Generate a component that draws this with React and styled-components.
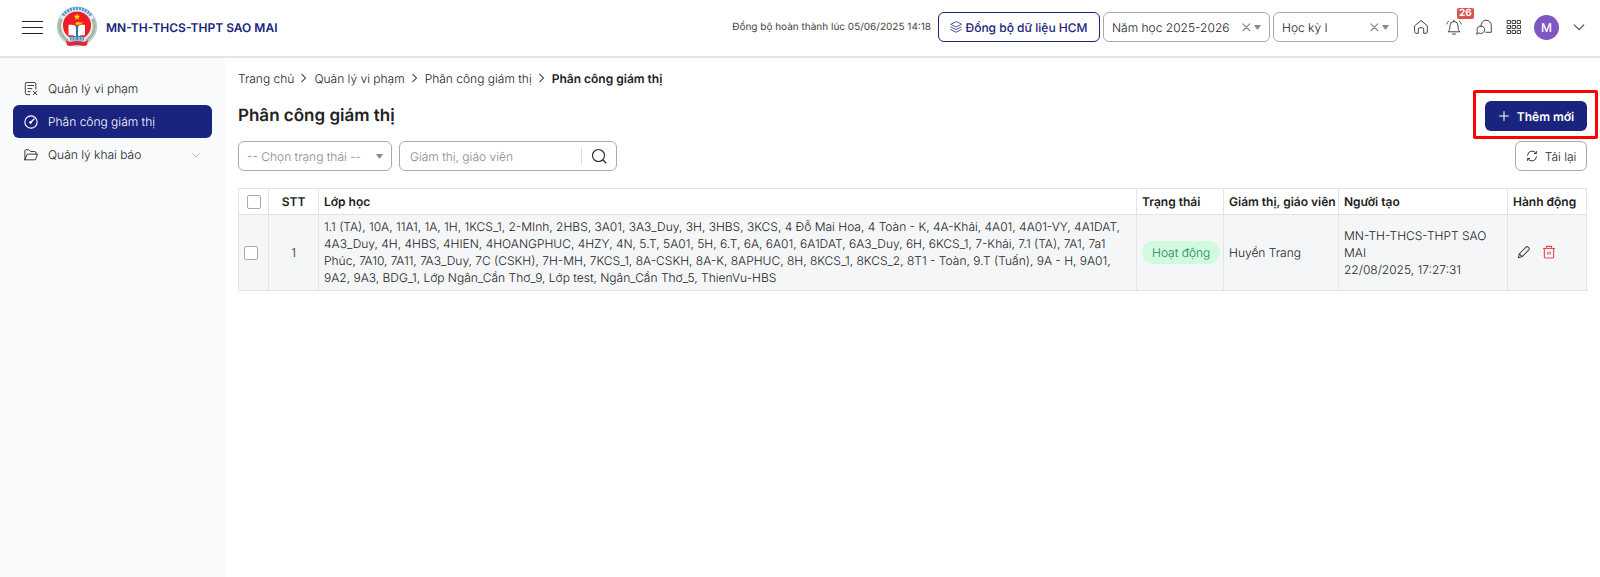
import React from 'react'
import styled, { createGlobalStyle } from "styled-components"

const classes = "1.1 (TA), 10A, 11A1, 1A, 1H, 1KCS_1, 2-MInh, 2HBS, 3A01, 3A3_Duy, 3H, 3HBS, 3KCS, 4 Đỗ Mai Hoa, 4 Toàn - K, 4A-Khải, 4A01, 4A01-VY, 4A1DAT, 4A3_Duy, 4H, 4HBS, 4HIEN, 4HOANGPHUC, 4HZY, 4N, 5.T, 5A01, 5H, 6.T, 6A, 6A01, 6A1DAT, 6A3_Duy, 6H, 6KCS_1, 7-Khải, 7.1 (TA), 7A1, 7a1 Phúc, 7A10, 7A11, 7A3_Duy, 7C (CSKH), 7H-MH, 7KCS_1, 8A-CSKH, 8A-K, 8APHUC, 8H, 8KCS_1, 8KCS_2, 8T1 - Toàn, 9.T (Tuấn), 9A - H, 9A01, 9A2, 9A3, BDG_1, Lớp Ngân_Cần Thơ_9, Lớp test, Ngân_Cần Thơ_5, ThienVu-HBS"

const rows = [
    {
        id: 1,
        classes,
        status: "Hoạt động",
        teacher: "Huyền Trang",
        creator: "MN-TH-THCS-THPT SAO MAI",
        time: "22/08/2025, 17:27:31",
    },
]

const Icon = ({ size = 16, children }) => (
    <svg width={size} height={size} viewBox="0 0 16 16" fill="none" stroke="currentColor" strokeLinecap="round" strokeLinejoin="round" aria-hidden="true">
        {children}
    </svg>
)

const NoteIcon = () => (
    <Icon size={14}>
        <path d="M6.500 14.500H3.500a2 2 0 0 1-2-2v-10a2 2 0 0 1 2-2h8a2 2 0 0 1 2 2v5.500M4.500 4h6.500M4.500 7.500h4.500M4.500 11h2.500M10.500 10.500l4 4M14.500 10.500l-4 4" />
    </Icon>
)
const GaugeIcon = () => (
    <Icon size={14}>
        <circle cx="8" cy="8" r="7" strokeWidth="1.3" />
        <path d="M7.500 8.500l4-4" strokeWidth="1.5" />
        <circle cx="7.500" cy="8.500" r="1.200" fill="currentColor" />
    </Icon>
)
const FolderIcon = () => (
    <Icon size={14}>
        <path d="M1 13V3.200C1 2.500 1.500 2 2.200 2h3.300l2 2h4.800c.7 0 1.200.5 1.200 1.200V7M1 13.500l2.600-6.500h11.900L13 13.500H1z" />
    </Icon>
)
const ChevronDown = ({ size = 14 }) => <Icon size={size}><path d="M2.500 5.500L8 11l5.500-5.500" strokeWidth="1.2" /></Icon>
const ChevronRight = () => <Icon size={12}><path d="M5 3l5 5-5 5" strokeWidth="1.400" /></Icon>
const LayersIcon = () => (
    <Icon size={12}>
        <path d="M8 1L1 4.500 8 8l7-3.500zM1 8l7 3.500L15 8M1 11.500L8 15l7-3.500" />
    </Icon>
)
const HomeIcon = () => (
    <Icon size={16}>
        <path d="M1.700 6.800L8 1.500l6.300 5.300v6.200c0 .8-.5 1.300-1.300 1.300h-2.300V10c0-.8-.4-1.200-1.200-1.200h-3c-.8 0-1.200.4-1.200 1.200v4.300H3c-.8 0-1.300-.5-1.300-1.300z" />
    </Icon>
)
const BellIcon = () => (
    <Icon size={16}>
        <path d="M2.500 12.500c1-1.200 1.500-2.500 1.500-6a4 4 0 0 1 8 0c0 3.500.5 4.800 1.500 6zM6.500 15h3M8 1v1.500M2.500 2.200C1.500 3 1 4 .8 5M13.500 2.200c1 .8 1.500 1.800 1.700 2.800" />
    </Icon>
)
const ChatIcon = () => (
    <Icon size={16}>
        <path d="M5 7.500C5 4 7 1.200 10 1.200s5.300 2.600 5.300 5.300v6.800H10" />
        <path d="M.8 14.800l.6-2.300a3.800 3.800 0 1 1 1.700 1.700z" />
    </Icon>
)
const GridIcon = () => (
    <Icon size={16}>
        {[1, 6, 11].map(y => [1, 6, 11].map(x => (
            <rect key={`${x}-${y}`} x={x + 0.5} y={y + 0.5} width="3" height="3" />
        )))}
    </Icon>
)
const CrossIcon = () => <Icon size={10}><path d="M3 3l11 11M14 3L3 14" strokeWidth="1.8" /></Icon>
const Caret = () => (
    <svg width="7" height="5" viewBox="0 0 7 5" aria-hidden="true">
        <path d="M0 0h7L3.500 5z" fill="#888" />
    </svg>
)
const SearchIcon = () => (
    <Icon size={16}>
        <circle cx="7.500" cy="7.500" r="6" strokeWidth="1.1" />
        <path d="M12 12l3 3" strokeWidth="1.1" />
    </Icon>
)
const PlusIcon = () => <Icon size={12}><path d="M8 2v12M2 8h12" strokeWidth="1.400" /></Icon>
const ReloadIcon = () => (
    <Icon size={12}>
        <path d="M2 7a6.200 6.200 0 0 1 11.500-2.500M14 9a6.200 6.200 0 0 1-11.500 2.500M13.800 2v2.700h-2.600M2.200 14v-2.700h2.600" strokeWidth="1.2" />
    </Icon>
)
const PencilIcon = () => (
    <Icon size={14}>
        <path d="M1.500 14.500l1.200-4.500 7.800-7.800c1.300-1.200 4.500 1.800 3.200 3.200L6 13.200zM2.700 10L6 13.200" strokeWidth="1.2" />
    </Icon>
)
const TrashIcon = () => (
    <Icon size={14}>
        <path d="M1.700 4h12.600M5 4V1.500h6V4M2.700 4v9.500c0 .8.500 1.300 1.300 1.300h8c.8 0 1.300-.5 1.300-1.300V4M6.700 8v2.500M9.300 8v2.500" strokeWidth="1.3" />
    </Icon>
)

const Emblem = () => (
    <svg width="42" height="42" viewBox="0 0 42 42" role="img" aria-label="Logo">
        <circle cx="21" cy="20.500" r="19.500" fill="#e3eef6" stroke="#9cc3e2" />
        <path d="M5.500 13C2 19 3 29 12 35M36.500 13c3.500 6 2.500 16-6.500 22" fill="none" stroke="#a9b795" strokeWidth="3" />
        <path d="M7 9.500A17.500 17.500 0 0 1 35 9.500" fill="none" stroke="#4f93cb" strokeWidth="3" strokeDasharray="2 1" />
        <circle cx="21" cy="19.500" r="14" fill="#ee1c25" />
        <path d="M21 7.500l.9 2.300h2.400l-1.900 1.500.7 2.400-2.100-1.400-2.100 1.400.7-2.400-1.900-1.500h2.400z" fill="#ffe600" />
        <path d="M12.500 19c3-.6 6 0 8.500 1.600 2.500-1.600 5-2.200 8-1.600v10.500c-3-.5-5.500 0-8 1.500-2.500-1.500-5-2-8.500-1.500z" fill="#fff" />
        <path d="M19.500 17.500c1.500-2 3-2 5-.8l2-.2c-1.500 2-3.500 2.800-7 1.800z" fill="#ffd500" stroke="#f7a800" strokeWidth=".5" />
        <path d="M19.500 20h3l-.5 2v8h2v2h-6v-2h2v-8z" fill="#2674b3" />
        <path d="M14 30.500h14v4H14z" fill="#4c8dc2" />
        <path d="M16 31v3M19 31v3M23 31v3M26 31v3" stroke="#dcebf5" />
        <path d="M10 34c3 3 7 1 11 1s8 2 11-1l-1 5c-3 2-6 0-10 0s-7 2-10 0z" fill="#e72731" />
        <path d="M15 37.500h12" stroke="#9d3456" strokeDasharray="2 1" />
    </svg>
)

const Picker = ({ label, value, $width }) => (
    <SelectBox $width={$width}>
        <Select aria-label={label} defaultValue={value}>
            <option>{value}</option>
        </Select>
        <ClearButton type="button" aria-label={`Xóa ${label}`}><CrossIcon /></ClearButton>
        <Caret />
    </SelectBox>
)

const Header = () => (
    <TopBar>
        <MenuButton type="button" aria-label="Menu"><span /><span /><span /></MenuButton>
        <Emblem />
        <School>MN-TH-THCS-THPT SAO MAI</School>
        <SyncText>Đồng bộ hoàn thành lúc 05/06/2025 14:18</SyncText>
        <Tools>
            <SyncButton type="button"><LayersIcon />Đồng bộ dữ liệu HCM</SyncButton>
            <Picker label="Năm học" value="Năm học 2025-2026" $width={167} />
            <Picker label="Học kỳ" value="Học kỳ I" $width={125} />
        </Tools>
        <IconButton type="button" aria-label="Trang chủ"><HomeIcon /></IconButton>
        <Shortcuts>
            <IconButton type="button" aria-label="Thông báo"><BellIcon /><Badge>26</Badge></IconButton>
            <IconButton type="button" aria-label="Tin nhắn"><ChatIcon /></IconButton>
            <IconButton type="button" aria-label="Ứng dụng"><GridIcon /></IconButton>
        </Shortcuts>
        <Avatar>M</Avatar>
        <IconButton type="button" aria-label="Tài khoản"><ChevronDown /></IconButton>
    </TopBar>
)

const Sidebar = () => (
    <Side>
        <SideLink href="#violations"><NoteIcon /><span>Quản lý vi phạm</span></SideLink>
        <SideLink href="#assign" $active><GaugeIcon /><span>Phân công giám thị</span></SideLink>
        <SideLink href="#declare"><FolderIcon /><span>Quản lý khai báo</span><Fade><ChevronDown size={10} /></Fade></SideLink>
    </Side>
)

const AssignTable = () => (
    <Table>
        <colgroup>
            <col width="30" />
            <col width="50" />
            <col />
            <col width="87" />
            <col width="115" />
            <col width="169" />
            <col width="79" />
        </colgroup>
        <thead>
            <tr>
                <Th $center><Check type="checkbox" aria-label="Chọn tất cả" /></Th>
                <Th $center>STT</Th>
                <Th>Lớp học</Th>
                <Th>Trạng thái</Th>
                <Th>Giám thị, giáo viên</Th>
                <Th>Người tạo</Th>
                <Th>Hành động</Th>
            </tr>
        </thead>
        <tbody>
            {rows.map(row => (
                <tr key={row.id}>
                    <Td><Check type="checkbox" aria-label={`Chọn dòng ${row.id}`} /></Td>
                    <Td $center>{row.id}</Td>
                    <Td>{row.classes}</Td>
                    <Td><Status>{row.status}</Status></Td>
                    <Td>{row.teacher}</Td>
                    <Td>{row.creator}<br />{row.time}</Td>
                    <Td>
                        <Actions>
                            <IconButton type="button" aria-label="Sửa"><PencilIcon /></IconButton>
                            <IconButton type="button" aria-label="Xóa" $danger><TrashIcon /></IconButton>
                        </Actions>
                    </Td>
                </tr>
            ))}
        </tbody>
    </Table>
)

const App = () => {
    return (
        <Page>
            <GlobalStyle />
            <Header />
            <Body>
                <Sidebar />
                <Main>
                    <Crumbs aria-label="Breadcrumb">
                        <a href="#home">Trang chủ</a><ChevronRight />
                        <a href="#violations">Quản lý vi phạm</a><ChevronRight />
                        <a href="#assign">Phân công giám thị</a><ChevronRight />
                        <strong>Phân công giám thị</strong>
                    </Crumbs>
                    <TitleRow>
                        <Title>Phân công giám thị</Title>
                        <Highlight>
                            <AddButton type="button"><PlusIcon />Thêm mới</AddButton>
                        </Highlight>
                    </TitleRow>
                    <Filters>
                        <SelectBox $width={154} $muted>
                            <Select aria-label="Trạng thái" defaultValue="">
                                <option value="">-- Chọn trạng thái --</option>
                            </Select>
                            <Caret />
                        </SelectBox>
                        <SearchBox>
                            <input type="text" aria-label="Giám thị, giáo viên" placeholder="Giám thị, giáo viên" />
                            <SearchButton type="button" aria-label="Tìm kiếm"><SearchIcon /></SearchButton>
                        </SearchBox>
                        <ReloadButton type="button"><ReloadIcon />Tải lại</ReloadButton>
                    </Filters>
                    <AssignTable />
                </Main>
            </Body>
        </Page>
    )
}

export default App


const GlobalStyle=createGlobalStyle`
*{
    box-sizing:border-box;
}
body{
    margin:0;
    background-color:#fff;
    color:#222;
    font-family:Inter, sans-serif;
    font-size:12px;
    font-weight:300;
    text-rendering:geometricPrecision;
}
button, input, select{
    font:inherit;
    color:inherit;
    text-rendering:inherit;
}
button{
    cursor:pointer;
}
a{
    color:inherit;
    text-decoration:none;
}
svg{
    display:block;
    flex-shrink:0;
}
`;
const Page=styled.div`
min-height:100vh;
display:flex;
flex-direction:column;
`;
const TopBar=styled.header`
height:58px;
padding:0 14px 2px 22px;
border-bottom:2px solid #e2e4ec;
display:flex;
align-items:center;
`;
const MenuButton=styled.button`
width:21px;
margin-right:13px;
padding:0;
border:none;
background:none;
display:flex;
flex-direction:column;
gap:5px;

span{
    height:1px;
    background-color:#222;
}
`;
const School=styled.div`
margin-left:8px;
color:#1a237e;
font-size:12px;
font-weight:600;
`;
const SyncText=styled.div`
margin-left:auto;
margin-right:7px;
color:#444;
font-size:10px;
font-weight:400;
`;
const Tools=styled.div`
margin-right:15px;
display:flex;
gap:3px;
`;
const SyncButton=styled.button`
width:162px;
height:30px;
padding:0;
border:1px solid #1a237e;
border-radius:6px;
background-color:#fff;
color:#1a237e;
font-weight:500;
display:flex;
align-items:center;
justify-content:center;
gap:3px;
`;
const SelectBox=styled.div`
width:${p => p.$width}px;
height:30px;
padding:0 8px;
border:1px solid #aaa;
border-radius:6px;
background-color:#fff;
color:${p => p.$muted ? "#888" : "#222"};
display:flex;
align-items:center;
gap:3px;
`;
const Select=styled.select`
flex:1;
min-width:0;
height:100%;
padding:0;
border:none;
outline:none;
background:none;
appearance:none;
`;
const ClearButton=styled.button`
padding:0;
border:none;
background:none;
color:#888;
`;
const Shortcuts=styled.div`
margin:0 12px 0 17px;
display:flex;
gap:14px;
`;
const IconButton=styled.button`
position:relative;
padding:0;
border:none;
background:none;
color:${p => p.$danger ? "#e5484d" : "#444"};
`;
const Badge=styled.span`
position:absolute;
top:-11px;
left:11px;
padding:0 2px;
border-radius:2px;
background-color:#d9534f;
color:#fff;
font-size:10px;
font-weight:700;
line-height:11px;
`;
const Avatar=styled.div`
width:25px;
height:25px;
margin-right:13px;
border-radius:50%;
background-color:#7e57c2;
color:#fff;
font-weight:500;
display:flex;
align-items:center;
justify-content:center;
`;
const Body=styled.div`
flex:1;
display:flex;
`;
const Side=styled.nav`
width:225px;
flex-shrink:0;
padding:14px 13px;
background-color:#f8fafc;
`;
const SideLink=styled.a`
height:33px;
padding:0 11px;
border-radius:6px;
background-color:${p => p.$active ? "#1a237e" : "transparent"};
color:${p => p.$active ? "#fff" : "#222"};
display:flex;
align-items:center;
gap:10px;
`;
const Fade=styled.i`
margin-left:auto;
color:#aaa;
`;
const Main=styled.main`
flex:1;
min-width:0;
padding:12px 13px;
`;
const Crumbs=styled.nav`
height:16px;
display:flex;
align-items:center;
gap:4px;

strong{
    font-weight:600;
}
`;
const TitleRow=styled.div`
margin-top:15px;
display:flex;
align-items:center;
justify-content:space-between;
`;
const Title=styled.h1`
margin:0;
font-size:17px;
font-weight:600;
line-height:22px;
`;
const Highlight=styled.div`
position:relative;

&::after{
    content:"";
    position:absolute;
    inset:-11px -11px -8px -12px;
    border:3px solid #f00;
    border-radius:2px;
    pointer-events:none;
}
`;
const AddButton=styled.button`
width:102px;
height:30px;
padding:0;
border:none;
border-radius:6px;
background-color:#1a237e;
color:#fff;
font-weight:600;
display:flex;
align-items:center;
justify-content:center;
gap:7px;
`;
const Filters=styled.div`
margin-top:10px;
display:flex;
gap:7px;
`;
const SearchBox=styled.div`
width:218px;
height:30px;
border:1px solid #aaa;
border-radius:6px;
display:flex;
align-items:center;

input{
    flex:1;
    min-width:0;
    padding:0 10px;
    border:none;
    outline:none;
    background:none;
}
input::placeholder{
    color:#888;
}
`;
const SearchButton=styled.button`
height:18px;
padding:0 9px;
border:none;
border-left:1px solid #ddd;
background:none;
`;
const ReloadButton=styled.button`
width:72px;
height:30px;
margin-left:auto;
padding:0;
border:1px solid #aaa;
border-radius:6px;
background-color:#fff;
display:flex;
align-items:center;
justify-content:center;
gap:7px;
`;
const Table=styled.table`
width:100%;
margin-top:17px;
border-collapse:collapse;
table-layout:fixed;
line-height:17px;
`;
const Th=styled.th`
height:26px;
padding:${p => p.$center ? "0" : "0 0 0 5px"};
border:1px solid #e2e4e8;
font-weight:600;
text-align:${p => p.$center ? "center" : "left"};
white-space:nowrap;
`;
const Td=styled.td`
padding:${p => p.$center ? "3px 0 4px" : "3px 0 4px 5px"};
border:1px solid #e2e4e8;
background-color:#f5f6f8;
text-align:${p => p.$center ? "center" : "left"};
`;
const Check=styled.input`
width:14px;
height:14px;
margin:0;
border:1px solid #aaa;
border-radius:2px;
background-color:#fff;
appearance:none;
display:inline-block;
vertical-align:text-bottom;
`;
const Status=styled.span`
display:inline-block;
padding:3px 10px;
border-radius:12px;
background-color:#d1fadf;
color:#198754;
white-space:nowrap;
`;
const Actions=styled.div`
padding-left:4px;
display:flex;
gap:11px;
`;
